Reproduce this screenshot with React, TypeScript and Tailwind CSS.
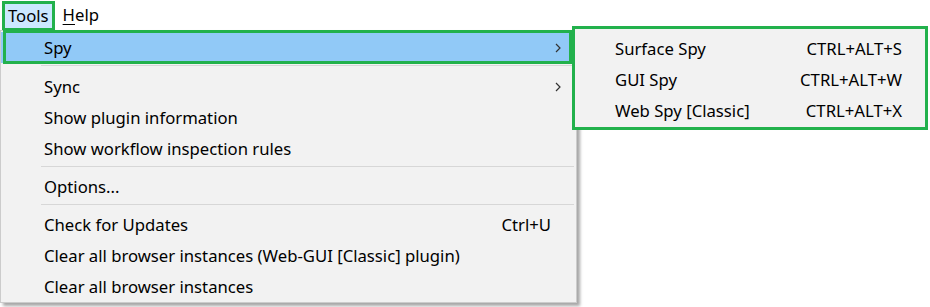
import React from "react";

type Item =
  | { kind: "item"; label: string; shortcut?: string; sub?: boolean; active?: boolean }
  | { kind: "sep"; tall?: boolean };

const items: Item[] = [
  { kind: "item", label: "Spy", sub: true, active: true },
  { kind: "sep", tall: true },
  { kind: "item", label: "Sync", sub: true },
  { kind: "item", label: "Show plugin information" },
  { kind: "item", label: "Show workflow inspection rules" },
  { kind: "sep" },
  { kind: "item", label: "Options..." },
  { kind: "sep" },
  { kind: "item", label: "Check for Updates", shortcut: "Ctrl+U" },
  { kind: "item", label: "Clear all browser instances (Web-GUI [Classic] plugin)" },
  { kind: "item", label: "Clear all browser instances" },
];

const spyItems = [
  { label: "Surface Spy", shortcut: "CTRL+ALT+S" },
  { label: "GUI Spy", shortcut: "CTRL+ALT+W" },
  { label: "Web Spy [Classic]", shortcut: "CTRL+ALT+X" },
];

const Chevron = () => (
  <svg width="6" height="10" viewBox="0 0 6 10" className="shrink-0">
    <polyline points="1,1 5,5 1,9" fill="none" stroke="#333" strokeWidth="1.2" />
  </svg>
);

const App = () => {
  return (
    <div
      className="relative w-[930px] h-[307px] bg-white overflow-hidden text-black"
      style={{ fontFamily: '"Noto Sans", "Open Sans", sans-serif' }}
    >
      {/* Menu bar */}
      <div className="flex h-[30px] items-center text-[16.7px]">
        <div className="h-[30px] mt-[2px] ml-[2px] px-[3px] flex items-center bg-[#cce8ff] border-[3px] border-[#22b14c]">
          Tools
        </div>
        <div className="ml-[8px]">
          <span className="underline underline-offset-[3px] decoration-1">H</span>elp
        </div>
      </div>

      {/* Tools dropdown */}
      <div className="absolute top-[30px] left-0 w-[577px] bg-[#f2f2f2] border border-[#cccccc] shadow-[3px_3px_3px_rgba(0,0,0,0.35)] pt-[1px] text-[16.7px]">
        {items.map((it, i) =>
          it.kind === "sep" ? (
            <div key={i} className={`${it.tall ? "h-[8px]" : "h-[7px]"} pt-[2px] pl-[40px] pr-[2px]`}>
              <div className="h-px bg-[#d7d7d7]" />
            </div>
          ) : (
            <div
              key={i}
              className={`relative flex items-center h-[31px] pl-[43px] pr-[15px] ${
                it.active ? "bg-[#91c9f7]" : ""
              }`}
            >
              <span className="flex-1 whitespace-nowrap">{it.label}</span>
              {it.shortcut && <span className="mr-[10px]">{it.shortcut}</span>}
              {it.sub && <Chevron />}
              {it.active && (
                <div className="absolute -top-[2px] left-[2px] right-[4px] -bottom-px border-[3px] border-[#22b14c]" />
              )}
            </div>
          )
        )}
      </div>

      {/* Spy submenu */}
      <div className="absolute top-[26px] left-[572px] w-[356px] h-[104px] bg-[#f2f2f2] border-[3px] border-[#22b14c] pt-[4px] text-[16.7px]">
        {spyItems.map((s) => (
          <div key={s.label} className="flex items-center h-[31px] pl-[40px] pr-[23px]">
            <span className="flex-1 whitespace-nowrap">{s.label}</span>
            <span>{s.shortcut}</span>
          </div>
        ))}
      </div>
    </div>
  );
};

export default App;
